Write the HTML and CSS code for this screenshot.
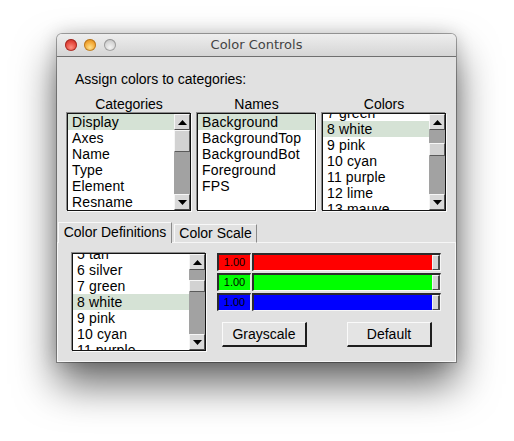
FILE: index.html
```html
<!DOCTYPE html>
<html>
<head>
<meta charset="utf-8">
<title>Color Controls</title>
<link rel="stylesheet" href="styles.css">
</head>
<body>
<div class="stage">
  <div class="window">
    <div class="titlebar">
      <div class="lights">
        <span class="light red"></span>
        <span class="light yellow"></span>
        <span class="light gray"></span>
      </div>
      <div class="title">Color Controls</div>
      <div></div>
    </div>
    <div class="content">
      <div class="prompt">Assign colors to categories:</div>
      <div class="lists">
        <div class="col col-cat">
          <div class="col-label">Categories</div>
          <div class="listbox">
            <div class="items">
              <div class="item sel">Display</div>
              <div class="item">Axes</div>
              <div class="item">Name</div>
              <div class="item">Type</div>
              <div class="item">Element</div>
              <div class="item">Resname</div>
            </div>
            <div class="scroll">
              <div class="arrow"><svg width="9" height="5" viewBox="0 0 9 5"><polygon points="0,5 4.5,0 9,5" fill="#000"/></svg></div>
              <div class="thumb thumb-cat"></div>
              <div class="rest"></div>
              <div class="arrow"><svg width="9" height="5" viewBox="0 0 9 5"><polygon points="0,0 9,0 4.5,5" fill="#000"/></svg></div>
            </div>
          </div>
        </div>
        <div class="col col-names">
          <div class="col-label">Names</div>
          <div class="listbox">
            <div class="items">
              <div class="item sel">Background</div>
              <div class="item">BackgroundTop</div>
              <div class="item">BackgroundBot</div>
              <div class="item">Foreground</div>
              <div class="item">FPS</div>
            </div>
          </div>
        </div>
        <div class="col col-colors">
          <div class="col-label">Colors</div>
          <div class="listbox">
            <div class="items">
              <div class="shift shift-colors">
                <div class="item">7 green</div>
                <div class="item sel">8 white</div>
                <div class="item">9 pink</div>
                <div class="item">10 cyan</div>
                <div class="item">11 purple</div>
                <div class="item">12 lime</div>
                <div class="item">13 mauve</div>
              </div>
            </div>
            <div class="scroll">
              <div class="arrow"><svg width="9" height="5" viewBox="0 0 9 5"><polygon points="0,5 4.5,0 9,5" fill="#000"/></svg></div>
              <div class="gap gap-colors"></div>
              <div class="thumb thumb-colors"></div>
              <div class="rest"></div>
              <div class="arrow"><svg width="9" height="5" viewBox="0 0 9 5"><polygon points="0,0 9,0 4.5,5" fill="#000"/></svg></div>
            </div>
          </div>
        </div>
      </div>
      <div class="tabs">
        <div class="tab-lead"></div>
        <div class="tab active">Color Definitions</div>
        <div class="tab-gap"></div>
        <div class="tab inactive">Color Scale</div>
        <div class="tab-fill"></div>
      </div>
      <div class="pane">
        <div class="listbox defs">
          <div class="items">
            <div class="shift shift-defs">
              <div class="item">5 tan</div>
              <div class="item">6 silver</div>
              <div class="item">7 green</div>
              <div class="item sel">8 white</div>
              <div class="item">9 pink</div>
              <div class="item">10 cyan</div>
              <div class="item">11 purple</div>
            </div>
          </div>
          <div class="scroll">
            <div class="arrow"><svg width="9" height="5" viewBox="0 0 9 5"><polygon points="0,5 4.5,0 9,5" fill="#000"/></svg></div>
            <div class="gap gap-defs"></div>
            <div class="thumb thumb-defs"></div>
            <div class="rest"></div>
            <div class="arrow"><svg width="9" height="5" viewBox="0 0 9 5"><polygon points="0,0 9,0 4.5,5" fill="#000"/></svg></div>
          </div>
        </div>
        <div class="editor">
          <div class="sliders">
            <div class="slider-row">
              <div class="value v-red">1.00</div>
              <div class="trough"><div class="fill f-red"></div><div class="knob"></div></div>
            </div>
            <div class="slider-row">
              <div class="value v-green">1.00</div>
              <div class="trough"><div class="fill f-green"></div><div class="knob"></div></div>
            </div>
            <div class="slider-row">
              <div class="value v-blue">1.00</div>
              <div class="trough"><div class="fill f-blue"></div><div class="knob"></div></div>
            </div>
          </div>
          <div class="btns">
            <div class="btn">Grayscale</div>
            <div class="btn">Default</div>
          </div>
        </div>
      </div>
    </div>
  </div>
</div>
</body>
</html>
```

FILE: styles.css
```css
* { box-sizing: border-box; }
html, body { margin: 0; padding: 0; background: #fff; }
body {
  width: 514px; height: 441px; overflow: hidden;
  font-family: "Liberation Sans", Arial, sans-serif;
  font-size: 14px; color: #000;
}
.stage { padding: 34px 0 0 57px; }
.window {
  width: 399px; height: 328px;
  background: #e1e1e1;
  border-radius: 5px 5px 0 0;
  box-shadow: 0 0 0 1px rgba(0,0,0,0.32), 0 22px 42px rgba(0,0,0,0.6), 0 0 18px rgba(0,0,0,0.18);
  display: flex; flex-direction: column;
}
.titlebar {
  height: 23px;
  border-bottom: 1px solid #6f6f6f;
  background: linear-gradient(#eeeeee, #d5d5d5);
  border-radius: 5px 5px 0 0;
  display: grid; grid-template-columns: 1fr auto 1fr; align-items: center;
}
.lights { display: flex; gap: 7.5px; padding-left: 7.5px; align-items: center; }
.light { width: 12px; height: 12px; border-radius: 50%; display: block; }
.red {
  background: radial-gradient(circle at 50% 70%, #ff8f80 0, #e2443a 55%, #b8281f 100%);
  box-shadow: inset 0 0 0 1px rgba(120,20,15,0.55);
}
.yellow {
  background: radial-gradient(circle at 50% 70%, #ffe08a 0, #f2a532 55%, #c97d12 100%);
  box-shadow: inset 0 0 0 1px rgba(140,80,10,0.5);
}
.gray {
  background: radial-gradient(circle at 50% 70%, #f4f4f4 0, #d4d4d4 55%, #ababab 100%);
  box-shadow: inset 0 0 0 1px rgba(90,90,90,0.45);
}
.title {
  font-family: "DejaVu Sans", "Noto Sans", sans-serif;
  font-size: 13px; color: #444; line-height: 16px;
}
.content { flex: 1; display: flex; flex-direction: column; padding-top: 14px; }
.prompt { padding-left: 18px; height: 16px; line-height: 16px; }
.lists { margin-top: 9px; display: flex; gap: 6px; padding-left: 10px; }
.col { display: flex; flex-direction: column; }
.col-cat, .col-colors { width: 124px; }
.col-names { width: 119px; }
.col-label { height: 16px; line-height: 16px; text-align: center; }
.listbox {
  margin-top: 1px; height: 98px;
  border: 1px solid #141414;
  box-shadow: -1px -1px 0 #8c8c8c, 1px 1px 0 #fbfbfb;
  background: #fff;
  display: flex; overflow: hidden;
}
.items { flex: 1; overflow: hidden; min-width: 0; }
.item { height: 16px; line-height: 16px; padding-left: 4px; white-space: nowrap; letter-spacing: 0.15px; }
.item.sel { background: #d5e2d5; }
.shift-colors { margin-top: -9px; }
.shift-defs { margin-top: -8px; }
.scroll { width: 16px; flex: none; display: flex; flex-direction: column; background: #a2a2a2; }
.arrow {
  height: 16px; flex: none;
  background: #d9d9d9;
  border: 1px solid; border-color: #f6f6f6 #4e4e4e #4e4e4e #f6f6f6;
  display: flex; align-items: center; justify-content: center;
}
.arrow svg { display: block; }
.thumb {
  flex: none; background: #d2d2d2;
  border: 1px solid; border-color: #f6f6f6 #5a5a5a #5a5a5a #f6f6f6;
}
.thumb-cat { height: 22px; }
.thumb-colors { height: 13px; }
.thumb-defs { height: 12px; }
.gap { flex: none; }
.gap-colors { height: 13px; }
.gap-defs { height: 10px; }
.rest { flex: 1; }
.tabs { margin-top: 11px; height: 21px; display: flex; }
.tab-lead { width: 1px; border-bottom: 1px solid #f6f6f6; }
.tab-gap { width: 2px; border-bottom: 1px solid #f6f6f6; }
.tab-fill { flex: 1; border-bottom: 1px solid #f6f6f6; }
.tab {
  font-size: 14px; text-align: center; white-space: nowrap;
  border-top: 1px solid #f8f8f8; border-left: 1px solid #f8f8f8; border-right: 1px solid #8a8a8a;
}
.tab.active { width: 114px; line-height: 19px; }
.tab.inactive { width: 83px; margin-top: 2px; line-height: 17px; border-bottom: 1px solid #f6f6f6; }
.pane {
  height: 119px;
  border: 1px solid #f6f6f6; border-top: none;
  display: flex; padding: 10px 0 0 14px; gap: 11px;
}
.listbox.defs { margin-top: 0; width: 134px; flex: none; }
.editor { width: 224px; display: flex; flex-direction: column; }
.sliders { display: flex; flex-direction: column; gap: 2px; }
.slider-row { display: flex; gap: 1px; height: 18px; }
.value {
  width: 34px; font-size: 11px; text-align: center; line-height: 15px;
  border-style: solid; border-width: 2px 1px 1px 2px;
  border-color: #2c2c2c #e9e9e9 #f6f6f6 #2c2c2c;
}
.trough {
  width: 189px; display: flex;
  border-style: solid; border-width: 2px 1px 1px 2px;
  border-color: #2c2c2c #f6f6f6 #f6f6f6 #2c2c2c;
}
.fill { flex: 1; }
.knob {
  width: 8px; background: #d4d4d4;
  border-style: solid; border-width: 1px 2px 1px 1px;
  border-color: #f4f4f4 #4a4a4a #4a4a4a #f4f4f4;
}
.v-red, .f-red { background: #ff0000; }
.v-green, .f-green { background: #00ff00; }
.v-blue, .f-blue { background: #0000ff; }
.btns { margin-top: 11px; display: flex; justify-content: space-between; padding: 0 9px 0 5px; }
.btn {
  width: 85px; height: 25px; line-height: 22px; text-align: center;
  background: #e4e4e4;
  border-style: solid; border-width: 1px 2px 2px 1px;
  border-color: #fafafa #1e1e1e #1e1e1e #fafafa;
}
```
